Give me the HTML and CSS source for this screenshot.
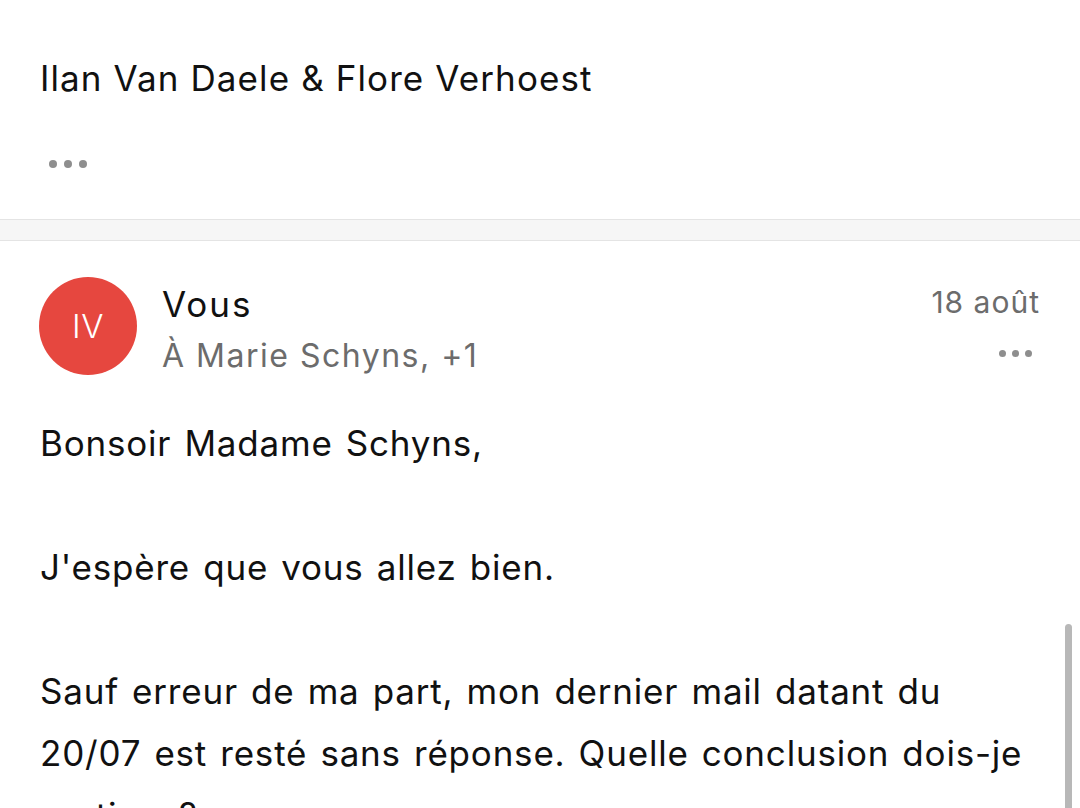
FILE: index.html
```html
<!DOCTYPE html>
<html lang="fr">
<head>
<meta charset="utf-8">
<title>Mail</title>
<link rel="stylesheet" href="styles.css">
</head>
<body>
<div class="page">
  <section class="prev">
    <p class="sig">Ilan Van Daele &amp; Flore Verhoest</p>
    <div class="dots dots-big"><span></span><span></span><span></span></div>
  </section>
  <div class="sep"></div>
  <section class="msg">
    <header class="msg-head">
      <div class="avatar">IV</div>
      <div class="meta">
        <div class="from">Vous</div>
        <div class="to">À Marie Schyns, +1</div>
      </div>
      <div class="side">
        <div class="date">18 août</div>
        <div class="dots dots-small"><span></span><span></span><span></span></div>
      </div>
    </header>
    <div class="body">
      <p>Bonsoir Madame Schyns,</p>
      <p>J'espère que vous allez bien.</p>
      <p>Sauf erreur de ma part, mon dernier mail datant du 20/07 est resté sans réponse. Quelle conclusion dois-je en tirer ?</p>
    </div>
  </section>
  <div class="scrollbar"></div>
</div>
</body>
</html>
```

FILE: styles.css
```css
html, body {
  margin: 0;
  padding: 0;
  background: #ffffff;
}
body {
  font-family: Inter, "Noto Sans", sans-serif;
  color: #111111;
  overflow: hidden;
  height: 808px;
}
.page {
  position: relative;
  height: 808px;
  overflow: hidden;
}
.prev {
  padding: 47px 40px 0 40px;
}
.sig {
  margin: 0;
  font-size: 35px;
  line-height: 62px;
  letter-spacing: 1.1px;
}
.dots {
  display: flex;
}
.dots span {
  display: block;
  border-radius: 50%;
  background: #8e8e8e;
}
.dots-big {
  margin-top: 51px;
  padding-left: 9px;
  gap: 7px;
}
.dots-big span {
  width: 8px;
  height: 8px;
}
.sep {
  margin-top: 51px;
  height: 20px;
  background: #f6f6f6;
  border-top: 1px solid #e4e4e4;
  border-bottom: 1px solid #e4e4e4;
}
.msg {
  padding: 36px 40px 0 39px;
}
.msg-head {
  display: flex;
  align-items: flex-start;
  height: 98px;
}
.avatar {
  width: 98px;
  height: 98px;
  border-radius: 50%;
  background: #e6473f;
  color: #ffffff;
  font-weight: 300;
  font-size: 33px;
  letter-spacing: 0.5px;
  display: flex;
  align-items: center;
  justify-content: center;
  flex: none;
}
.meta {
  margin-left: 25px;
  padding-top: 7px;
  flex: 1;
}
.from {
  font-size: 35px;
  line-height: 40px;
  letter-spacing: 2px;
  color: #111111;
}
.to {
  font-size: 32px;
  line-height: 44px;
  letter-spacing: 1.5px;
  margin-top: 10px;
  color: #6c6c6c;
}
.side {
  display: flex;
  flex-direction: column;
  align-items: flex-end;
  padding-top: 5px;
}
.date {
  font-size: 30px;
  line-height: 40px;
  letter-spacing: 1px;
  color: #6c6c6c;
}
.dots-small {
  margin-top: 28px;
  margin-right: 8px;
  gap: 6px;
}
.dots-small span {
  width: 7px;
  height: 7px;
}
.body {
  margin-top: 37px;
  margin-right: -5px;
  padding-left: 1px;
}
.body p {
  margin: 0 0 62px 0;
  font-size: 35px;
  line-height: 62px;
  letter-spacing: 0.8px;
  word-spacing: 2.5px;
}
.scrollbar {
  position: absolute;
  right: 8px;
  top: 624px;
  width: 7px;
  height: 200px;
  border-radius: 4px;
  background: #b8b8b8;
}
```
